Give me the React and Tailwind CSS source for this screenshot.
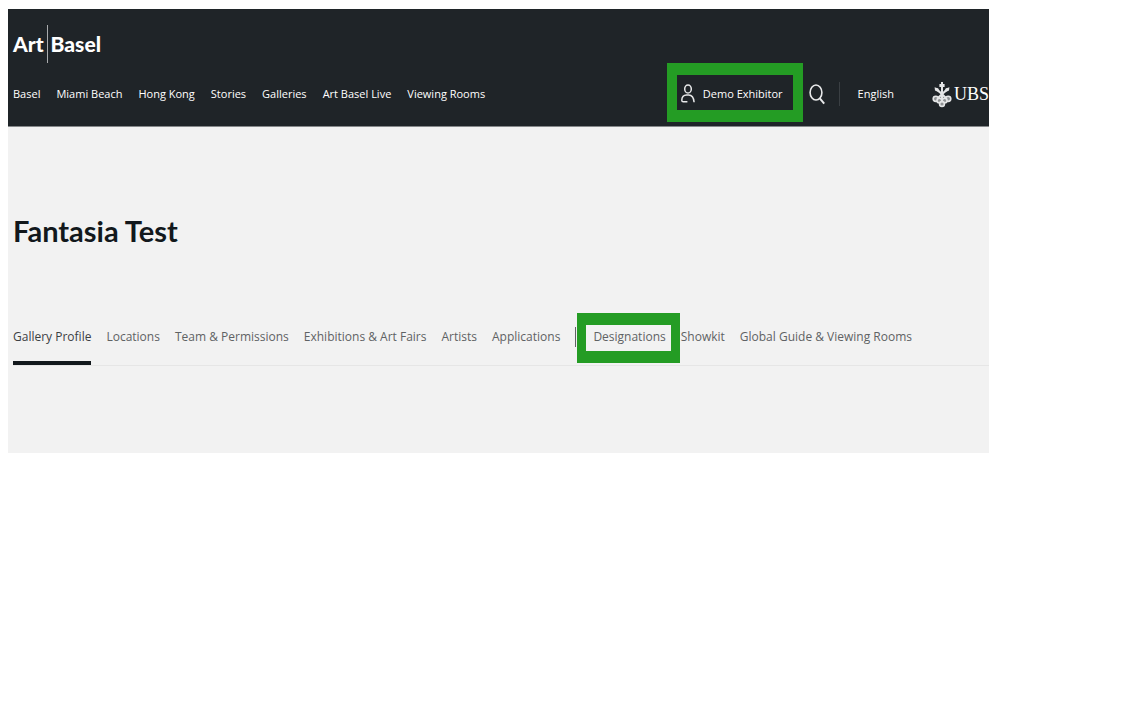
import React from "react";
import clsx from "clsx";

const navItems = [
  "Basel",
  "Miami Beach",
  "Hong Kong",
  "Stories",
  "Galleries",
  "Art Basel Live",
  "Viewing Rooms",
];

const profileTabs = [
  "Gallery Profile",
  "Locations",
  "Team & Permissions",
  "Exhibitions & Art Fairs",
  "Artists",
  "Applications",
];

const fairTabs = ["Designations", "Showkit", "Global Guide & Viewing Rooms"];

function UserIcon() {
  return (
    <svg viewBox="0 0 14 20" className="w-[14px] h-5" fill="none" stroke="#e8e9ea" strokeWidth="1.5" aria-hidden="true">
      <ellipse cx="7" cy="5" rx="3.3" ry="4.1" />
      <path d="M6.400 17.800H2.300c-1 0-1.500-.5-1.500-1.600 0-3.400 1.900-5.300 4.700-5.300h2.200c3 0 5 2.400 5.400 7.300" />
    </svg>
  );
}

function SearchIcon() {
  return (
    <svg viewBox="0 0 16 22" className="w-4 h-[22px]" fill="none" stroke="#e8e9ea" strokeWidth="1.6" aria-hidden="true">
      <ellipse cx="7" cy="9.500" rx="5.900" ry="7.500" />
      <path d="M10.800 15.400l4.400 5.200" strokeWidth="2" />
    </svg>
  );
}

// Three crossed keys
function KeysIcon() {
  return (
    <svg viewBox="0 0 20 27" className="w-5 h-[27px]" fill="none" stroke="#e4e5e6" aria-hidden="true">
      <path d="M10 1v18" strokeWidth="2" />
      <path d="M4.500 8l10 9.500M15.500 8l-10 9.500" strokeWidth="2.200" />
      <path d="M7.400 3h5.200v3H7.400zM2.600 6.200l3.800 1.400.8 4-4.200-2zM17.400 6.200l-3.800 1.400-.8 4 4.200-2z" fill="#e4e5e6" stroke="none" />
      <g fill="#8f9294" strokeWidth="1.600">
        <circle cx="3.800" cy="17.800" r="2.600" />
        <circle cx="16.200" cy="17.800" r="2.600" />
        <circle cx="7.400" cy="19.500" r="2.400" />
        <circle cx="12.600" cy="19.500" r="2.400" />
        <circle cx="10" cy="23" r="2.400" />
      </g>
    </svg>
  );
}

function Logo() {
  return (
    <a
      href="#home"
      className="flex items-center gap-[3px] h-10 w-fit font-['Lato',sans-serif] text-[21px] leading-10 font-black text-white"
    >
      <span>Art</span>
      <span className="w-px h-[38px] bg-[#a9abad]" />
      <span>Basel</span>
    </a>
  );
}

function TabLink({ label, active }) {
  return (
    <a
      href="#tab"
      aria-current={active ? "page" : undefined}
      className={clsx(
        "h-[38px] border-b-4 whitespace-nowrap",
        active ? "border-[#12181c] text-[#3c4043]" : "border-transparent text-[#5f6264]"
      )}
    >
      {label}
    </a>
  );
}

export default function App() {
  return (
    <div className="mt-[9px] ml-2 mr-[151px] font-['Open_Sans','Noto_Sans',sans-serif]">
      <header className="h-[118px] pl-[5px] pt-[15px] bg-[#1f2428] border-b border-[#85888a] text-white">
        <Logo />
        <div className="flex items-center h-[60px] text-[11px] leading-5 font-medium">
          <nav className="flex gap-4 whitespace-nowrap">
            {navItems.map((item) => (
              <a key={item} href="#nav">{item}</a>
            ))}
          </nav>
          <div className="ml-auto flex items-center whitespace-nowrap">
            <button className="relative flex items-center gap-2 mr-[26px]">
              <UserIcon />
              Demo Exhibitor
              <span className="absolute -left-[14px] -right-5 -top-[21px] -bottom-[18px] border-x-[10px] border-y-[12px] border-[#249c24]" />
            </button>
            <button aria-label="Search">
              <SearchIcon />
            </button>
            <span className="w-px h-6 ml-[14px] bg-[#3a3f43]" />
            <button className="ml-[18px]">English</button>
            <a href="#ubs" className="flex items-center ml-[38px] gap-[2px] font-['Liberation_Serif',serif] text-[18px] font-normal">
              <KeysIcon />
              UBS
            </a>
          </div>
        </div>
      </header>

      <main className="h-[326px] pl-[5px] pt-[82px] bg-[#f2f2f2]">
        <h1 className="font-['Lato',sans-serif] text-[29px] leading-[44px] font-bold text-[#12181c]">Fantasia Test</h1>
        <nav className="flex gap-[15px] mt-[74px] border-b border-[#e6e6e6] text-[12px] leading-5">
          {profileTabs.map((tab, i) => (
            <TabLink key={tab} label={tab} active={i === 0} />
          ))}
          <span className="w-px h-5 mr-[2px] bg-[#5f6264]" />
          {fairTabs.map((tab, i) => (
            <div key={tab} className="relative flex">
              <TabLink label={tab} />
              {i === 0 && (
                <span className="absolute -left-4 -right-[14px] -top-[14px] h-[50px] border-x-[9px] border-y-[12px] border-[#249c24] pointer-events-none" />
              )}
            </div>
          ))}
        </nav>
      </main>
    </div>
  );
}
